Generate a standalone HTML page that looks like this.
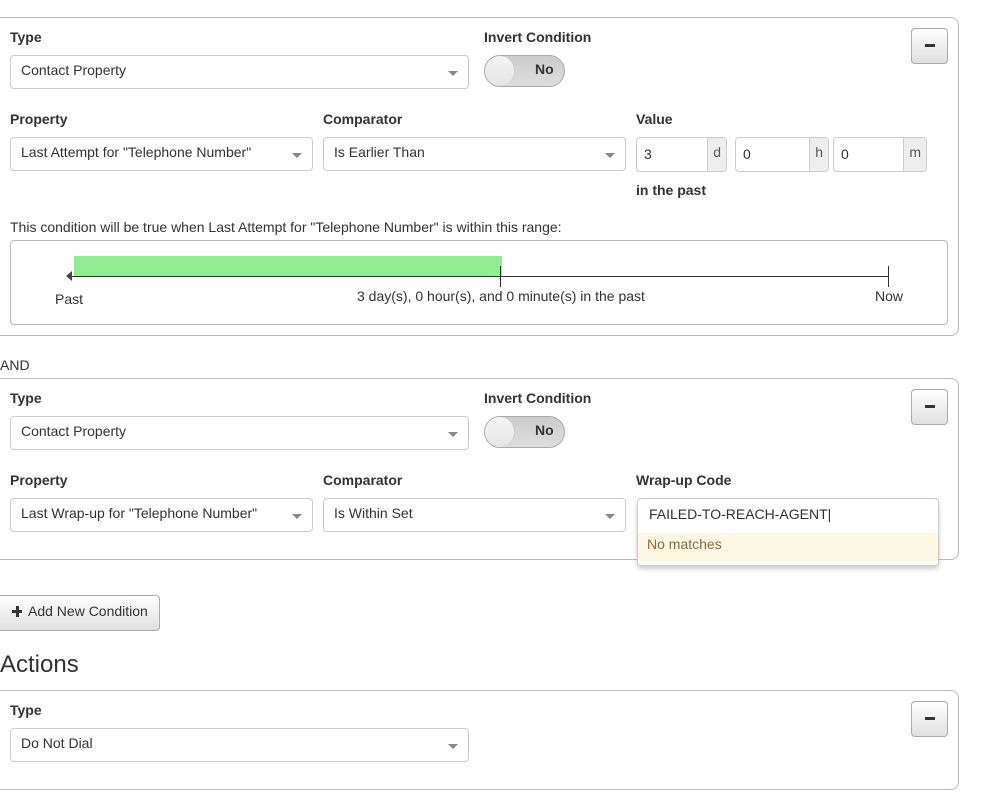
<!DOCTYPE html>
<html><head><style>
body{margin:0;width:1002px;height:796px;background:#fff;font-family:"Liberation Sans",sans-serif;font-size:14px;color:#333;position:relative;overflow:hidden}
div,span{box-sizing:border-box}
.a{position:absolute}
.panel{position:absolute;left:-10px;width:969px;border:1px solid #bbb;border-radius:8px}
.lbl{position:absolute;font-weight:bold;font-size:14px;color:#333}
.sel{position:absolute;height:34px;border:1px solid #ccc;border-radius:4px;background:#fff;padding:5px 10px;font-size:14px;line-height:18px}
.sel:after{content:"";position:absolute;right:10px;top:15px;border-left:5px solid transparent;border-right:5px solid transparent;border-top:5px solid #888}
.tog{position:absolute;width:81px;height:32px;border:1px solid #aaa;border-radius:16px;background:linear-gradient(#ccc,#ddd)}
.tog .k{position:absolute;left:0;top:0;width:30px;height:30px;border-radius:15px;background:linear-gradient(#f5f5f5,#e5e5e5);border-right:1px solid #ccc}
.tog .t{position:absolute;left:50px;top:5px;font-weight:bold;color:#333}
.min{position:absolute;left:911px;width:37px;height:36px;border:1px solid #aaa;border-radius:4px;background:linear-gradient(#fff,#e0e0e0)}
.min:after{content:"";position:absolute;left:13px;top:15px;width:10px;height:3px;background:#333}
.inp{position:absolute;height:35px;border:1px solid #ccc;border-radius:4px;background:#fff;overflow:hidden}
.inp span{position:absolute;left:7px;top:8px}
.inp b{position:absolute;right:0;top:0;bottom:0;background:#eee;border-left:1px solid #ccc;font-weight:normal;color:#555;padding:6px 5px 0}
</style></head><body>
<!-- panel 1 -->
<div class="panel" style="top:17px;height:319px"></div>
<div class="lbl" style="left:10px;top:29px">Type</div>
<div class="sel" style="left:10px;top:55px;width:459px">Contact Property</div>
<div class="lbl" style="left:484px;top:29px">Invert Condition</div>
<div class="tog" style="left:484px;top:55px"><div class="k"></div><span class="t">No</span></div>
<div class="min" style="top:28px"></div>
<div class="lbl" style="left:10px;top:111px">Property</div>
<div class="sel" style="left:10px;top:137px;width:303px">Last Attempt for "Telephone Number"</div>
<div class="lbl" style="left:323px;top:111px">Comparator</div>
<div class="sel" style="left:323px;top:137px;width:303px">Is Earlier Than</div>
<div class="lbl" style="left:636px;top:111px">Value</div>
<div class="inp" style="left:636px;top:137px;width:91px"><span>3</span><b>d</b></div>
<div class="inp" style="left:735px;top:137px;width:94px"><span>0</span><b>h</b></div>
<div class="inp" style="left:833px;top:137px;width:94px"><span>0</span><b>m</b></div>
<div class="lbl" style="left:636px;top:182px">in the past</div>
<div class="a" style="left:10px;top:219px">This condition will be true when Last Attempt for "Telephone Number" is within this range:</div>
<div class="a" style="left:10px;top:240px;width:938px;height:85px;border:1px solid #bbb;border-radius:4px"></div>
<div class="a" style="left:74px;top:256px;width:428px;height:20px;background:#90ec90"></div>
<div class="a" style="left:70px;top:276px;width:819px;height:1px;background:#333"></div>
<div class="a" style="left:66px;top:271px;border-top:5px solid transparent;border-bottom:5px solid transparent;border-right:6px solid #444"></div>
<div class="a" style="left:500px;top:266px;width:1px;height:21px;background:#333"></div>
<div class="a" style="left:888px;top:266px;width:1px;height:21px;background:#333"></div>
<div class="a" style="left:55px;top:291px">Past</div>
<div class="a" style="left:357px;top:288px">3 day(s), 0 hour(s), and 0 minute(s) in the past</div>
<div class="a" style="left:875px;top:288px">Now</div>
<div class="a" style="left:0;top:357px">AND</div>
<!-- panel 2 -->
<div class="panel" style="top:378px;height:182px"></div>
<div class="lbl" style="left:10px;top:390px">Type</div>
<div class="sel" style="left:10px;top:416px;width:459px">Contact Property</div>
<div class="lbl" style="left:484px;top:390px">Invert Condition</div>
<div class="tog" style="left:484px;top:416px"><div class="k"></div><span class="t">No</span></div>
<div class="min" style="top:389px"></div>
<div class="lbl" style="left:10px;top:472px">Property</div>
<div class="sel" style="left:10px;top:498px;width:303px">Last Wrap-up for "Telephone Number"</div>
<div class="lbl" style="left:323px;top:472px">Comparator</div>
<div class="sel" style="left:323px;top:498px;width:303px">Is Within Set</div>
<div class="lbl" style="left:636px;top:472px">Wrap-up Code</div>
<div class="a" style="left:637px;top:498px;width:302px;height:68px;border:1px solid #ccc;border-radius:4px;background:#fff;box-shadow:0 3px 5px rgba(0,0,0,.2)">
<div class="a" style="left:11px;top:7px">FAILED-TO-REACH-AGENT|</div>
<div class="a" style="left:0;top:34px;width:300px;height:29px;background:#fcf8e3;color:#8a6d3b;padding:3px 0 0 9px">No matches</div>
</div>
<!-- button -->
<div class="a" style="left:-5px;top:595px;width:165px;height:36px;border:1px solid #aaa;border-radius:4px;background:linear-gradient(#fff,#e0e0e0);padding:7px 0 0 32px">Add New Condition</div>
<div class="a" style="left:12px;top:610px;width:10px;height:3px;background:#333"></div>
<div class="a" style="left:15.5px;top:606px;width:3px;height:11px;background:#333"></div>
<div class="a" style="left:0;top:651px;font-size:24px">Actions</div>
<!-- panel 3 -->
<div class="panel" style="top:690px;height:100px"></div>
<div class="lbl" style="left:10px;top:702px">Type</div>
<div class="sel" style="left:10px;top:728px;width:459px">Do Not Dial</div>
<div class="min" style="top:701px"></div>
</body></html>
